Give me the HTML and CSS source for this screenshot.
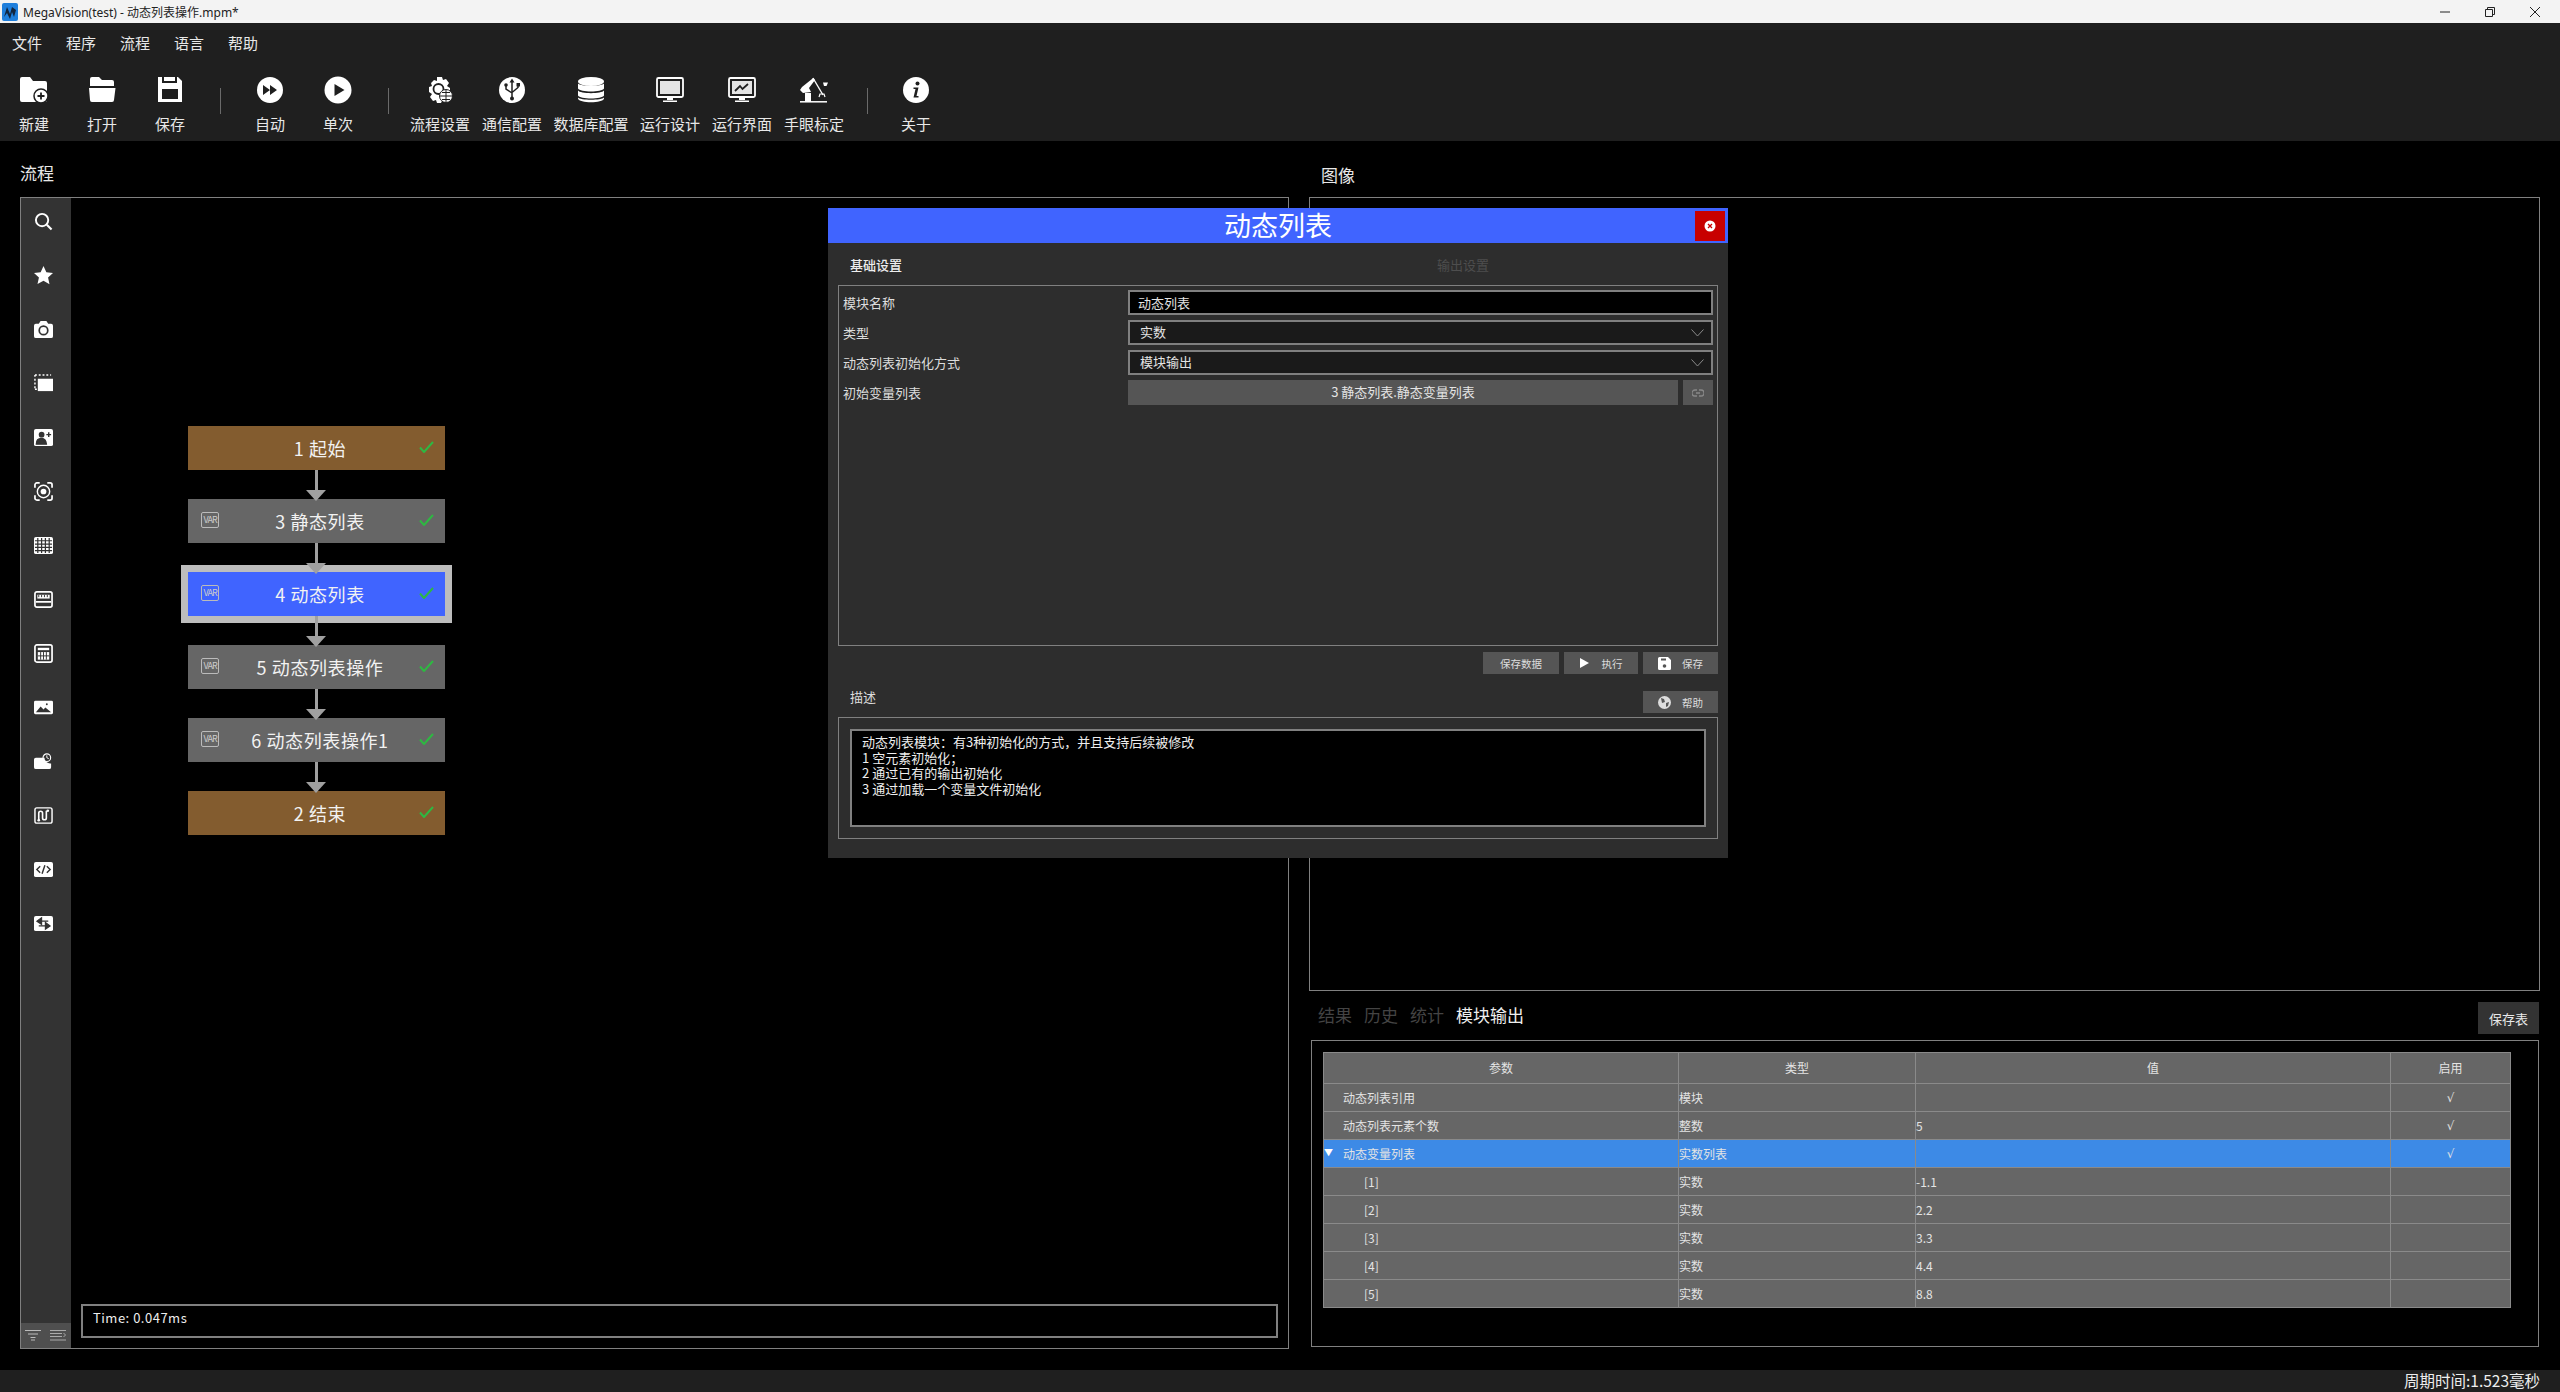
FILE: index.html
```html
<!DOCTYPE html>
<html lang="zh-CN">
<head>
  <meta charset="UTF-8">
  <title>MegaVision(test) - 动态列表操作.mpm*</title>
  <link rel="stylesheet" href="styles.css">
</head>
<body>

<!-- 标题栏 -->
<header class="titlebar">
  <svg class="logo" viewBox="0 0 16 18"><rect width="16" height="18" rx="2" fill="#1f7fdc"/><path d="M2 14 5 4l3 7 2-7 4 3-2 7-2-5-2 7-3-6z" fill="#12263f"/></svg>
  <span class="titlebar-text">MegaVision(test) - 动态列表操作.mpm*</span>
  <div class="win-controls">
    <svg viewBox="0 0 10 10"><path d="M0 5h10" stroke="#222" fill="none"/></svg>
    <svg viewBox="0 0 10 10"><path d="M.5 2.5h7v7h-7zM2.5 2.5V.5h7v7h-2" stroke="#222" fill="none"/></svg>
    <svg viewBox="0 0 10 10"><path d="M0 0l10 10M10 0 0 10" stroke="#222" fill="none"/></svg>
  </div>
</header>

<nav class="menubar">
  <span>文件</span><span>程序</span><span>流程</span><span>语言</span><span>帮助</span>
</nav>

<div class="toolbar">
  <div class="tool">
    <svg viewBox="0 0 28 28"><path d="M2 1h8l3 4h12a2 2 0 0 1 2 2v17a2 2 0 0 1-2 2H2a2 2 0 0 1-2-2V3a2 2 0 0 1 2-2z" fill="#fff"/><circle cx="21" cy="20" r="7" fill="#fff" stroke="#1f1f1f" stroke-width="1.5"/><path d="M21 16.5v7M17.500 20h7" stroke="#1f1f1f" stroke-width="1.800"/></svg>
    <span>新建</span>
  </div>
  <div class="tool">
    <svg viewBox="0 0 28 28"><path d="M4 1h7l3 3h10a2 2 0 0 1 2 2v4H2V3a2 2 0 0 1 2-2zM1 12h26.500l-1.500 12a2 2 0 0 1-2 2H4a2 2 0 0 1-2-2z" fill="#fff"/></svg>
    <span>打开</span>
  </div>
  <div class="tool">
    <svg viewBox="0 0 28 28"><path d="M2 1h4v6h15V1h1l4 4v21H2zM8 1h11v4H8zM6 13v10h16V13z" fill="#fff" fill-rule="evenodd"/></svg>
    <span>保存</span>
  </div>
  <div class="tool-sep"></div>
  <div class="tool">
    <svg viewBox="0 0 28 28"><circle cx="14" cy="14" r="13" fill="#fff"/><path d="M7 9l7 5-7 5zM14 9l7 5-7 5z" fill="#1f1f1f"/></svg>
    <span>自动</span>
  </div>
  <div class="tool">
    <svg viewBox="0 0 28 28"><circle cx="14" cy="14" r="13.500" fill="#fff"/><path d="M10.500 8l10 6-10 6z" fill="#1f1f1f"/></svg>
    <span>单次</span>
  </div>
  <div class="tool-sep"></div>
  <div class="tool wide">
    <svg viewBox="0 0 28 28"><path d="M11 1h5l1 3 3-1 3 4-2 3 3 2v4l-3 2-1 4-3 1-2 4h-4l-1-3-3 1-3-4 2-3-3-2v-5l3-1-1-3 3-3 3 1z" fill="#fff"/><circle cx="12.500" cy="13" r="5" fill="#fff" stroke="#1f1f1f" stroke-width="1.800"/><circle cx="20" cy="20" r="6.500" fill="#fff" stroke="#1f1f1f"/><path d="M14 20h12M20 14v12M16 16.500h8M16 23.500h8" stroke="#1f1f1f" fill="none"/></svg>
    <span>流程设置</span>
  </div>
  <div class="tool wide">
    <svg viewBox="0 0 28 28"><circle cx="14" cy="14" r="13" fill="#fff"/><path d="M14 5v17M8 10v3l6 4M20 9v2.500l-6 5" stroke="#1f1f1f" stroke-width="1.500" fill="none"/><path d="M14 2.500l2.500 4h-5z" fill="#1f1f1f"/><circle cx="8" cy="9" r="1.800" fill="#1f1f1f"/><path d="M18.500 7h3.500v3.500h-3.500z" fill="#1f1f1f"/><circle cx="14" cy="22.500" r="2" fill="#1f1f1f"/></svg>
    <span>通信配置</span>
  </div>
  <div class="tool widest">
    <svg viewBox="0 0 28 28"><ellipse cx="14" cy="5.500" rx="13" ry="4.500" fill="#fff"/><path d="M1 7.500c2 3 24 3 26 0v5c-2 4-24 4-26 0zM1 14.500c2 3.500 24 3.500 26 0v5c-2 4-24 4-26 0zM1 21.500c2 3 24 3 26 0v1c-1 5-25 5-26 0z" fill="#fff"/></svg>
    <span>数据库配置</span>
  </div>
  <div class="tool wide">
    <svg viewBox="0 0 28 28"><rect x="1" y="2" width="26" height="19" rx="1.500" fill="none" stroke="#fff" stroke-width="1.800"/><rect x="4" y="5" width="20" height="13" fill="#e4e4e4"/><path d="M11 21h6v3h-6zM7 24.500h14v1.500H7z" fill="#fff"/></svg>
    <span>运行设计</span>
  </div>
  <div class="tool wide">
    <svg viewBox="0 0 28 28"><rect x="1" y="2" width="26" height="19" rx="1.500" fill="none" stroke="#fff" stroke-width="1.800"/><rect x="4" y="5" width="20" height="13" fill="#e4e4e4"/><path d="M7 15l5-5 2.500 3L20 8" stroke="#1f1f1f" stroke-width="1.800" fill="none"/><path d="M11 21h6v3h-6zM7 24.500h14v1.500H7z" fill="#fff"/></svg>
    <span>运行界面</span>
  </div>
  <div class="tool wide">
    <svg viewBox="0 0 28 28"><path d="M0 25.800h27" stroke="#fff" stroke-width="1.500"/><path d="M5 17h6v9H5zM0 14l2-3L12 3l1-1 2 2-6 8 2 4-8 1z" fill="#fff"/><path d="M13 2l10 17" stroke="#fff" stroke-width="1.400" fill="none"/><path d="M23 6.500h5l-1.500 3.500H24z" fill="#fff"/><path d="M19 21l1-3h4l1 3" stroke="#fff" stroke-width="1.200" fill="none"/></svg>
    <span>手眼标定</span>
  </div>
  <div class="tool-sep last"></div>
  <div class="tool">
    <svg viewBox="0 0 28 28"><circle cx="14" cy="14" r="13" fill="#fff"/><circle cx="15.500" cy="7.500" r="2" fill="#1f1f1f"/><path d="M11.500 11.500h5l-2 8.500h2v1.500h-5l2-8.500h-2z" fill="#1f1f1f"/></svg>
    <span>关于</span>
  </div>
</div>

<main class="main">
  <section class="col-left">
    <h2 class="panel-title">流程</h2>
    <div class="flow-frame">
      <aside class="sidebar">
        <div class="side-icons">
          <svg viewBox="0 0 20 20"><circle cx="8.500" cy="8.500" r="6.500" fill="none" stroke="#fff" stroke-width="2"/><path d="M13.500 13.500l5 5" stroke="#fff" stroke-width="2.200"/></svg>
          <svg viewBox="0 0 20 20"><path d="M10 0l3 6.600 7 .8-5.200 4.700 1.500 7L10 15.500 3.700 19l1.500-7L0 7.400l7-.8z" fill="#fff"/></svg>
          <svg viewBox="0 0 20 20"><path d="M2 4h3l2-3h6l2 3h3a2 2 0 0 1 2 2v11a2 2 0 0 1-2 2H2a2 2 0 0 1-2-2V6a2 2 0 0 1 2-2z" fill="#fff"/><circle cx="10" cy="11" r="4.500" fill="#fff" stroke="#333" stroke-width="1.800"/></svg>
          <svg viewBox="0 0 20 20"><path d="M1 1h17M1 1v15M1 16h3" stroke="#fff" stroke-width="1.500" stroke-dasharray="2 2" fill="none"/><rect x="4" y="5" width="16" height="13" fill="#fff"/></svg>
          <svg viewBox="0 0 20 20"><rect y="1" width="20" height="18" rx="2" fill="#fff"/><circle cx="8" cy="7" r="3" fill="#333"/><path d="M2.500 17c0-5 2-6 5.500-6s4.500 2 5 6zM13 7h5M15.500 4.500v5" fill="#333" stroke="#333" stroke-width="1.500"/></svg>
          <svg viewBox="0 0 20 20"><path d="M1 6V3a2 2 0 0 1 2-2h3M14 1h3a2 2 0 0 1 2 2v3M19 14v3a2 2 0 0 1-2 2h-3M6 19H3a2 2 0 0 1-2-2v-3" stroke="#fff" stroke-width="1.800" fill="none"/><circle cx="10" cy="10" r="6.500" fill="none" stroke="#fff" stroke-width="1.500"/><circle cx="10" cy="10" r="3" fill="#fff"/></svg>
          <svg viewBox="0 0 20 20"><rect y="1" width="20" height="18" rx="2" fill="#fff"/><path d="M1 5h18M1 8.500h18M1 12h18M1 15.500h18M4 2v16M8 2v16M12 2v16M16 2v16" stroke="#333" stroke-width="1.300"/></svg>
          <svg viewBox="0 0 20 20"><rect x="1" y="2" width="18" height="16" rx="2" fill="none" stroke="#fff" stroke-width="1.800"/><path d="M3.500 5h13v4h-13z" fill="#fff"/><path d="M5 5v2.500M8 5v2.500M11 5v2.500M14 5v2.500" stroke="#333"/><path d="M2 12.500h16" stroke="#fff" stroke-width="1.800"/></svg>
          <svg viewBox="0 0 20 20"><rect x="1" y="1" width="18" height="18" rx="2" fill="none" stroke="#fff" stroke-width="1.800"/><rect x="4" y="4" width="12" height="2.500" fill="#fff"/><path d="M4 8.500h12v8H4z" fill="#fff"/><path d="M7 8.500v8M10 8.500v8M13 8.500v8M4 12.500h12" stroke="#333"/></svg>
          <svg viewBox="0 0 20 20"><rect y="3" width="20" height="14" rx="1.500" fill="#fff"/><path d="M2 15l5-6 3 3 2-2 6 5z" fill="#333"/><circle cx="13.500" cy="6.500" r="1" fill="#333"/></svg>
          <svg viewBox="0 0 20 20"><path d="M2 6h9a6 6 0 0 0 7 6v4a2 2 0 0 1-2 2H2a2 2 0 0 1-2-2V8a2 2 0 0 1 2-2z" fill="#fff"/><circle cx="13.500" cy="6" r="4" fill="none" stroke="#fff" stroke-width="1.200"/><path d="M13.500 3.500V6l2 1" stroke="#fff" fill="none"/></svg>
          <svg viewBox="0 0 20 20"><rect x="1" y="2" width="18" height="16" rx="2" fill="none" stroke="#fff" stroke-width="1.500"/><path d="M5 15V7.500a2 2 0 0 1 4 0v5a2 2 0 0 0 4 0V5" stroke="#fff" stroke-width="1.700" fill="none"/><circle cx="14.500" cy="5" r="1.400" fill="#fff"/><circle cx="5" cy="15" r="1.400" fill="#fff"/></svg>
          <svg viewBox="0 0 20 20"><rect y="2" width="20" height="16" rx="2" fill="#fff"/><path d="M6.500 6.500 3 10l3.500 3.500M13.500 6.500 17 10l-3.500 3.500M11.500 5.500l-3 9" stroke="#333" stroke-width="1.500" fill="none"/></svg>
          <svg viewBox="0 0 20 20"><rect y="2" width="20" height="16" rx="2" fill="#fff"/><path d="M8 4 3 7.500 8 11zM3 7.500h12M12 9l5 3.500-5 3.500zM5 12.500h12" fill="#333" stroke="#333" stroke-width="1.200"/></svg>
        </div>
        <div class="side-foot">
          <svg viewBox="0 0 16 11"><path d="M0 .5h16M3 4h10M5.500 7.500h5" stroke="#bbb" fill="none"/><path d="M6 9.500h4v1H6z" fill="#bbb"/></svg>
          <svg viewBox="0 0 16 11"><path d="M0 .5h16M0 3.500h12M0 6.500h12M0 10h16M13.500 3l2 2-2 2" stroke="#aaa" fill="none"/></svg>
        </div>
      </aside>

      <div class="canvas">
        <div class="flow">
          <div class="node brown"><span class="node-name">1 起始</span>
            <svg class="check" viewBox="0 0 15 12"><path d="M1 6.500 5 11 14 1" stroke="#2eb842" stroke-width="2" fill="none"/></svg></div>
          <div class="link"></div>
          <div class="node gray"><span class="var">VAR</span><span class="node-name">3 静态列表</span>
            <svg class="check" viewBox="0 0 15 12"><path d="M1 6.500 5 11 14 1" stroke="#2eb842" stroke-width="2" fill="none"/></svg></div>
          <div class="link"></div>
          <div class="node blue selected"><span class="var">VAR</span><span class="node-name">4 动态列表</span>
            <svg class="check" viewBox="0 0 15 12"><path d="M1 6.500 5 11 14 1" stroke="#2eb842" stroke-width="2" fill="none"/></svg></div>
          <div class="link"></div>
          <div class="node gray"><span class="var">VAR</span><span class="node-name">5 动态列表操作</span>
            <svg class="check" viewBox="0 0 15 12"><path d="M1 6.500 5 11 14 1" stroke="#2eb842" stroke-width="2" fill="none"/></svg></div>
          <div class="link"></div>
          <div class="node gray"><span class="var">VAR</span><span class="node-name">6 动态列表操作1</span>
            <svg class="check" viewBox="0 0 15 12"><path d="M1 6.500 5 11 14 1" stroke="#2eb842" stroke-width="2" fill="none"/></svg></div>
          <div class="link"></div>
          <div class="node brown"><span class="node-name">2 结束</span>
            <svg class="check" viewBox="0 0 15 12"><path d="M1 6.500 5 11 14 1" stroke="#2eb842" stroke-width="2" fill="none"/></svg></div>
        </div>
        <div class="time-box">Time: 0.047ms</div>
      </div>
    </div>
  </section>

  <section class="col-right">
    <h2 class="panel-title image-title">图像</h2>
    <div class="image-frame"></div>
    <div class="result-tabs">
      <span>结果</span><span>历史</span><span>统计</span><span class="on">模块输出</span>
      <button class="save-table">保存表</button>
    </div>
    <div class="result-frame">
      <table class="result-table">
        <colgroup><col class="c1"><col class="c2"><col class="c3"><col class="c4"></colgroup>
        <thead>
          <tr><th>参数</th><th>类型</th><th>值</th><th>启用</th></tr>
        </thead>
        <tbody>
          <tr><td class="name">动态列表引用</td><td>模块</td><td></td><td class="mid">√</td></tr>
          <tr><td class="name">动态列表元素个数</td><td>整数</td><td>5</td><td class="mid">√</td></tr>
          <tr class="picked"><td class="name"><span class="tri">▼</span>动态变量列表</td><td>实数列表</td><td></td><td class="mid">√</td></tr>
          <tr><td class="sub">[1]</td><td>实数</td><td>-1.1</td><td></td></tr>
          <tr><td class="sub">[2]</td><td>实数</td><td>2.2</td><td></td></tr>
          <tr><td class="sub">[3]</td><td>实数</td><td>3.3</td><td></td></tr>
          <tr><td class="sub">[4]</td><td>实数</td><td>4.4</td><td></td></tr>
          <tr><td class="sub">[5]</td><td>实数</td><td>8.8</td><td></td></tr>
        </tbody>
      </table>
    </div>
  </section>
</main>

<footer class="statusbar">周期时间:1.523毫秒</footer>

<!-- 模块设置对话框 -->
<div class="dialog">
  <div class="dialog-head">
    动态列表
    <button class="dialog-close"><svg viewBox="0 0 12 12"><circle cx="6" cy="6" r="5.500" fill="#fff"/><path d="M4 4l4 4M8 4 4 8" stroke="#c80000" stroke-width="1.300"/></svg></button>
  </div>
  <div class="dialog-tabs"><span class="on">基础设置</span><span class="off">输出设置</span></div>
  <div class="form-frame">
    <div class="form-row"><label>模块名称</label><div class="field input">动态列表</div></div>
    <div class="form-row"><label>类型</label><div class="field select"><span>实数</span><svg viewBox="0 0 13 8"><path d="M.5 .5 6.500 7l6-6.500" stroke="#8a8a8a" fill="none"/></svg></div></div>
    <div class="form-row"><label>动态列表初始化方式</label><div class="field select"><span>模块输出</span><svg viewBox="0 0 13 8"><path d="M.5 .5 6.500 7l6-6.500" stroke="#8a8a8a" fill="none"/></svg></div></div>
    <div class="form-row"><label>初始变量列表</label><div class="field ref">3 静态列表.静态变量列表</div><div class="field link-btn"><svg viewBox="0 0 12 10"><path d="M5 2H3a3 3 0 0 0 0 6h2M7 2h2a3 3 0 0 1 0 6H7M4 5h4" stroke="#888" stroke-width="1.300" fill="none"/></svg></div></div>
  </div>
  <div class="action-row">
    <button class="act w76">保存数据</button>
    <button class="act w74"><svg class="act-play" viewBox="0 0 9 10"><path d="M0 0l9 5-9 5z" fill="#fff"/></svg>执行</button>
    <button class="act w75"><svg class="act-icon" viewBox="0 0 13 13"><path d="M1.500 0H10l3 3v8.500a1.500 1.500 0 0 1-1.500 1.500h-10A1.500 1.500 0 0 1 0 11.500v-10A1.500 1.500 0 0 1 1.500 0z" fill="#fff"/><rect x="3" y="1.500" width="5" height="2" fill="#555"/><circle cx="6.500" cy="9" r="1.800" fill="#555"/></svg>保存</button>
  </div>
  <div class="desc-head">
    <span>描述</span>
    <button class="act w75"><svg class="act-icon" viewBox="0 0 13 13"><circle cx="6.500" cy="6.500" r="6.500" fill="#ddd"/><path d="M3 2l3 1 1 3-3 1zM8 7l3-1-1 4-2 1z" fill="#555"/></svg>帮助</button>
  </div>
  <div class="desc-frame">
    <div class="desc-text">动态列表模块：有3种初始化的方式，并且支持后续被修改<br>1 空元素初始化；<br>2 通过已有的输出初始化<br>3 通过加载一个变量文件初始化</div>
  </div>
</div>

</body>
</html>
```
FILE: styles.css
```css
* {
  box-sizing: border-box;
}
html, body {
  margin: 0;
  padding: 0;
}
body {
  position: relative;
  width: 2560px;
  height: 1392px;
  overflow: hidden;
  display: flex;
  flex-direction: column;
  background: #000;
  color: #e8e8e8;
  font-family: "Noto Sans CJK SC", "Noto Sans", sans-serif;
}
button {
  font-family: inherit;
  border: none;
  padding: 0;
  color: inherit;
}

/* 标题栏 */
.titlebar {
  height: 23px;
  background: #f3f3f3;
  color: #222;
  display: flex;
  align-items: center;
  padding-left: 2px;
  font-size: 12px;
}
.logo {
  width: 16px;
  height: 18px;
}
.titlebar-text {
  margin-left: 5px;
  font-family: "Noto Sans", "Noto Sans CJK SC", sans-serif;
}
.win-controls {
  margin-left: auto;
  display: flex;
  gap: 35px;
  padding-right: 20px;
}
.win-controls svg {
  width: 10px;
  height: 10px;
}

/* 菜单和工具栏 */
.menubar {
  height: 37px;
  background: #1f1f1f;
  display: flex;
  gap: 24px;
  align-items: center;
  padding: 2px 0 0 12px;
  font-size: 15px;
}
.toolbar {
  height: 81px;
  background: #1f1f1f;
  display: flex;
  align-items: flex-start;
}
.tool {
  width: 68px;
  padding-top: 16px;
  display: flex;
  flex-direction: column;
  align-items: center;
  font-size: 15px;
  line-height: 20px;
}
.tool.wide {
  width: 72px;
}
.tool.widest {
  width: 86px;
}
.tool svg {
  width: 28px;
  height: 28px;
  margin-bottom: 10px;
}
.tool-sep {
  width: 1px;
  height: 26px;
  margin: 28px 15px 0 16px;
  background: #6a6a6a;
}
.tool-sep.last {
  margin: 28px 14px 0 17px;
}

/* 主体 */
.main {
  flex: 1;
  display: flex;
  gap: 20px;
  padding: 0 20px 21px 20px;
  min-height: 0;
}
.col-left {
  width: 1269px;
  display: flex;
  flex-direction: column;
}
.col-right {
  width: 1231px;
  display: flex;
  flex-direction: column;
}
.panel-title {
  height: 56px;
  margin: 0;
  padding-top: 20px;
  font-size: 17px;
  font-weight: normal;
  line-height: 24px;
}
.image-title {
  padding: 22px 0 0 12px;
}
.flow-frame {
  flex: 1;
  display: flex;
  border: 1px solid #808080;
}
.sidebar {
  width: 50px;
  background: #333;
  display: flex;
  flex-direction: column;
  justify-content: space-between;
}
.side-icons {
  display: flex;
  flex-direction: column;
  align-items: center;
  gap: 35px;
  padding: 14px 6px 0 0;
}
.side-icons svg {
  width: 19px;
  height: 19px;
  display: block;
}
.side-foot {
  height: 25px;
  background: #4f4f4f;
  display: flex;
  align-items: center;
  gap: 9px;
  padding-left: 4px;
}
.side-foot svg {
  width: 16px;
  height: 11px;
}

/* 流程图 */
.canvas {
  flex: 1;
  display: flex;
  flex-direction: column;
  justify-content: space-between;
  padding: 0 10px 10px;
}
.flow {
  width: 257px;
  margin: 228px 0 0 107px;
}
.node {
  position: relative;
  height: 44px;
  display: grid;
  grid-template-columns: 50px 1fr 43px;
  align-items: center;
  font-size: 18px;
  letter-spacing: 0.6px;
  color: #f2f2f2;
}
.brown {
  background: #835c2f;
}
.gray {
  background: #666;
}
.blue {
  background: #4064ff;
}
.selected {
  outline: 7px solid #bdbdbd;
}
.node-name {
  grid-column: 2;
  text-align: center;
  white-space: nowrap;
  margin-top: -1px;
}
.var {
  grid-column: 1;
  margin-left: 13px;
  margin-top: -2px;
  width: 18px;
  height: 16px;
  border: 1px solid #bbb;
  border-radius: 2px;
  font-size: 9px;
  line-height: 14px;
  letter-spacing: -1px;
  text-align: center;
  color: #ccc;
}
.check {
  grid-column: 3;
  width: 15px;
  height: 12px;
  margin: -3px 0 0 17px;
}
.link {
  position: relative;
  z-index: 1;
  width: 3px;
  height: 29px;
  margin: 0 auto;
  background: #a0a0a0;
}
.link::after {
  content: "";
  position: absolute;
  left: -9px;
  bottom: -2px;
  border-left: 10.5px solid transparent;
  border-right: 10.5px solid transparent;
  border-top: 11px solid #a0a0a0;
}
.time-box {
  height: 34px;
  border: 2px solid #808080;
  padding: 2px 10px;
  font-size: 13px;
  line-height: 20px;
  letter-spacing: 0.5px;
  color: #eee;
}

/* 右侧 */
.image-frame {
  height: 794px;
  border: 1px solid #808080;
}
.result-tabs {
  height: 49px;
  display: flex;
  align-items: flex-start;
  padding: 12px 1px 0 9px;
  font-size: 17px;
  line-height: 24px;
  color: #444;
}
.result-tabs span {
  margin-right: 12px;
}
.result-tabs .on {
  color: #eee;
}
.save-table {
  margin: -1px 0 0 auto;
  width: 61px;
  height: 32px;
  background: #333;
  font-size: 13px;
  color: #e8e8e8;
}
.result-frame {
  height: 307px;
  margin: 0 1px 0 2px;
  border: 1px solid #808080;
  padding: 11px;
}
.result-table {
  width: 1187px;
  border-collapse: collapse;
  table-layout: fixed;
  font-size: 12px;
  color: #e4e4e4;
}
.c1 {
  width: 355px;
}
.c2 {
  width: 237px;
}
.c3 {
  width: 475px;
}
.c4 {
  width: 120px;
}
.result-table th,
.result-table td {
  border: 1px solid #8a8a8a;
  background: #666;
  padding: 0;
  height: 28px;
  font-weight: normal;
  line-height: 14px;
}
.result-table th {
  height: 31px;
  text-align: center;
}
.result-table .picked td {
  background: #3d8ae6;
}
.result-table .name {
  padding-left: 19px;
  position: relative;
}
.result-table .sub {
  padding-left: 40px;
}
.result-table .mid {
  text-align: center;
  font-family: "DejaVu Sans", sans-serif;
}
.tri {
  position: absolute;
  left: 0;
  top: 6px;
  font-size: 9px;
  color: #fff;
}

.statusbar {
  height: 22px;
  background: #1f1f1f;
  padding-right: 20px;
  text-align: right;
  font-size: 15.500px;
  line-height: 20px;
  color: #eee;
}

/* 对话框 */
.dialog {
  position: absolute;
  left: 828px;
  top: 208px;
  width: 900px;
  height: 650px;
  background: #2d2d2d;
  font-size: 13px;
}
.dialog-head {
  position: relative;
  height: 35px;
  background: #4064ff;
  color: #fff;
  font-size: 27px;
  line-height: 33px;
  text-align: center;
}
.dialog-close {
  position: absolute;
  top: 3px;
  right: 3px;
  width: 30px;
  height: 30px;
  background: #c80000;
  display: flex;
  align-items: center;
  justify-content: center;
}
.dialog-close svg {
  width: 12px;
  height: 12px;
}
.dialog-tabs {
  height: 42px;
  padding: 12px 0 0 22px;
  display: flex;
  line-height: 20px;
}
.dialog-tabs .on {
  color: #eee;
  font-weight: 500;
}
.dialog-tabs .off {
  margin-left: 535px;
  color: #4e4e4e;
}
.form-frame {
  height: 361px;
  margin: 0 10px;
  padding: 4px;
  border: 1px solid #808080;
  display: flex;
  flex-direction: column;
  gap: 5px;
}
.form-row {
  display: flex;
  height: 25px;
  gap: 5px;
  align-items: center;
}
.form-row label {
  width: 280px;
  margin-top: -1px;
  color: #ddd;
}
.field {
  height: 25px;
  line-height: 21px;
  color: #e4e4e4;
}
.input {
  flex: 1;
  border: 2px solid #808080;
  background: #000;
  padding-left: 8px;
}
.select {
  flex: 1;
  display: flex;
  justify-content: space-between;
  align-items: center;
  border: 2px solid #808080;
  background: #1a1a1a;
  padding: 0 7px 0 10px;
}
.select span {
  margin-top: -2px;
}
.select svg {
  width: 13px;
  height: 8px;
}
.ref {
  flex: 1;
  background: #555;
  line-height: 24px;
  text-align: center;
}
.link-btn {
  width: 30px;
  background: #555;
  display: flex;
  align-items: center;
  justify-content: center;
}
.link-btn svg {
  width: 12px;
  height: 10px;
}
.action-row {
  display: flex;
  justify-content: flex-end;
  gap: 5px;
  margin: 6px 10px 0;
}
.act {
  height: 22px;
  background: #555;
  font-size: 10.500px;
  color: #ddd;
  display: flex;
  align-items: center;
  justify-content: center;
}
.w76 {
  width: 76px;
}
.w74 {
  width: 74px;
}
.w75 {
  width: 75px;
}
.act-play {
  width: 9px;
  height: 10px;
  margin-right: 13px;
}
.act-icon {
  width: 13px;
  height: 13px;
  margin-right: 11px;
}
.desc-head {
  display: flex;
  justify-content: space-between;
  margin: 17px 10px 4px 22px;
}
.desc-head span {
  margin-top: -4px;
  line-height: 20px;
  color: #ddd;
}
.desc-frame {
  height: 122px;
  margin: 0 10px;
  padding: 11px;
  border: 1px solid #808080;
}
.desc-text {
  height: 98px;
  border: 2px solid #808080;
  background: #000;
  padding: 3px 10px;
  line-height: 15.700px;
  color: #eee;
}
```
